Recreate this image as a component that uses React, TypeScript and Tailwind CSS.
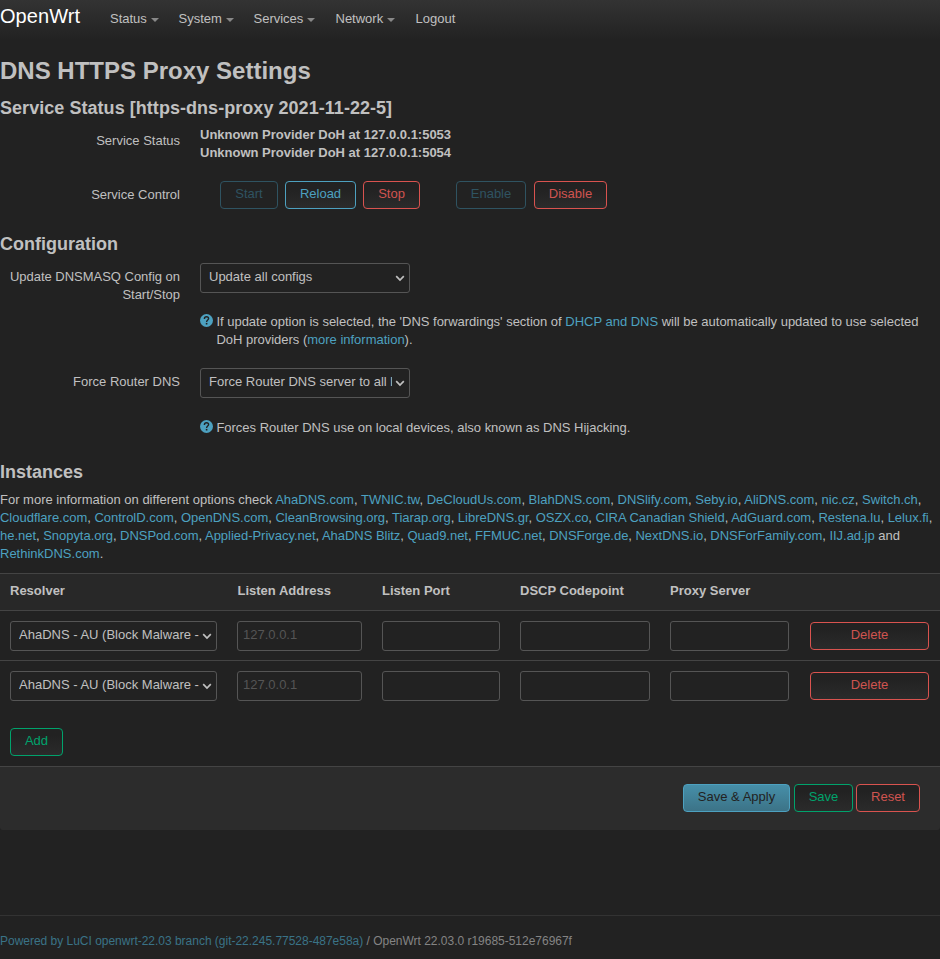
import type { ReactNode } from "react";

const menu = [
  { label: "Status", cls: "w-[68.5px]", caret: true },
  { label: "System", cls: "w-[75px]", caret: true },
  { label: "Services", cls: "w-[82px]", caret: true },
  { label: "Network", cls: "w-[80px]", caret: true },
  { label: "Logout", cls: "w-[60px]", caret: false },
];

const providerLines = [
  { cls: "tracking-[0.002px]", names: ["AhaDNS.com", "TWNIC.tw", "DeCloudUs.com", "BlahDNS.com", "DNSlify.com", "Seby.io", "AliDNS.com", "nic.cz", "Switch.ch"] },
  { cls: "tracking-[-0.014px]", names: ["Cloudflare.com", "ControlD.com", "OpenDNS.com", "CleanBrowsing.org", "Tiarap.org", "LibreDNS.gr", "OSZX.co", "CIRA Canadian Shield", "AdGuard.com", "Restena.lu", "Lelux.fi"] },
  { cls: "tracking-[-0.03px]", names: ["he.net", "Snopyta.org", "DNSPod.com", "Applied-Privacy.net", "AhaDNS Blitz", "Quad9.net", "FFMUC.net", "DNSForge.de", "NextDNS.io", "DNSForFamily.com"] },
];

const tones = {
  action: "border-[#4da1c0] text-[#4da1c0] bg-linear-to-b from-[#222] from-25% to-[#2b2b2b]",
  muted: "border-[#2f5361] text-[#2f5361] bg-[#222]",
  negative: "border-[#d9534f] text-[#d05450] bg-linear-to-b from-[#222] from-25% to-[#2b2b2b]",
  positive: "border-[#00a36c] text-[#00a36c] bg-linear-to-b from-[#222] from-25% to-[#2b2b2b]",
  primary: "border-[#4da1c0] text-[#222] bg-linear-to-b from-[#468fa9] to-[#3c7387]",
};

function Button({ tone, className, children }: { tone: keyof typeof tones; className: string; children: ReactNode }) {
  return (
    <button className={`box-border h-7 shrink-0 rounded-[4px] border pb-[2px] text-center leading-[18px] ${tones[tone]} ${className}`}>
      {children}
    </button>
  );
}

function Select({ className, children }: { className: string; children: ReactNode }) {
  return (
    <div className={`flex h-[30px] items-center rounded-[3px] border border-[#555] pr-[4px] pl-2 ${className}`}>
      <span className="mr-[3px] min-w-0 flex-1 overflow-hidden whitespace-nowrap pb-[2px] leading-[18px]">{children}</span>
      <svg className="mt-[1px] h-[7px] w-[10px] shrink-0" viewBox="0 0 10 7" fill="none" stroke="#c0c0c0" strokeWidth="1.7">
        <path d="M1.2 1.2 5 5l3.8-3.8" />
      </svg>
    </div>
  );
}

function Hint({ children }: { children: ReactNode }) {
  return (
    <div className="flex leading-[18px]">
      <svg className="mt-[1px] mr-[3.4px] h-[13px] w-[13px] shrink-0" viewBox="0 0 13 13">
        <circle cx="6.5" cy="6.5" r="6.5" fill="#4da1c0" />
        <path d="M4.4 4.9c0-1.4.9-2.1 2.1-2.1s2.1.7 2.1 1.8c0 1.5-2 1.5-2 3.3" fill="none" stroke="#222" strokeWidth="1.4" />
        <rect x="5.8" y="8.9" width="1.6" height="1.6" fill="#222" />
      </svg>
      <div className="whitespace-nowrap tracking-[-0.012px]">{children}</div>
    </div>
  );
}

function Link({ children }: { children: ReactNode }) {
  return <a className="text-[#4da1c0]">{children}</a>;
}

function InstanceRow() {
  const field = "h-[30px] min-w-0 rounded-[3px] border border-[#555] bg-transparent px-[5px] pb-[3px] placeholder:text-[#555] placeholder:opacity-100 outline-none";
  return (
    <div className="flex h-[49px] items-center pl-[10px]">
      <Select className="w-[207px]">AhaDNS - AU (Block Malware -</Select>
      <input className={`${field} ml-5 w-[125px]`} placeholder="127.0.0.1" />
      <input className={`${field} ml-5 w-[118px]`} />
      <input className={`${field} ml-5 w-[130px]`} />
      <input className={`${field} ml-5 w-[119px]`} />
      <Button tone="negative" className="ml-[21px] w-[119px]">Delete</Button>
    </div>
  );
}

export default function App() {
  return (
    <div className="h-[959px] w-[940px] overflow-hidden bg-[#222] font-['Liberation_Sans',Arial,sans-serif] text-[13px] leading-[18px] text-[#c0c0c0]">
      <header className="flex h-10 bg-linear-to-b from-[#333] to-[#222] whitespace-nowrap">
        <a className="w-[110px] pt-[4px] text-[20px] leading-6 tracking-[0.05px] text-white">OpenWrt</a>
        {menu.map((m) => (
          <a key={m.label} className={`flex h-[38px] items-center ${m.cls}`}>
            {m.label}
            {m.caret && <span className="mt-[2px] ml-1 border-x-4 border-t-4 border-x-transparent border-t-[#888]" />}
          </a>
        ))}
      </header>

      <h2 className="mt-[13px] h-9 text-[24px] leading-9 font-bold">DNS HTTPS Proxy Settings</h2>
      <h3 className="h-9 pt-[1px] text-[18px] leading-9 font-bold tracking-[0.045px]">Service Status [https-dns-proxy 2021-11-22-5]</h3>

      <div className="flex h-9">
        <div className="w-[180px] pt-[7px] text-right">Service Status</div>
        <div className="pl-5 pt-[1px] font-bold tracking-[-0.01px]">
          Unknown Provider DoH at 127.0.0.1:5053
          <br />
          Unknown Provider DoH at 127.0.0.1:5054
        </div>
      </div>
      <div className="mt-5 flex h-7">
        <div className="w-[180px] pt-[5px] text-right">Service Control</div>
        <Button tone="muted" className="ml-10 w-[58px]">Start</Button>
        <Button tone="action" className="ml-[7px] w-[71px]">Reload</Button>
        <Button tone="negative" className="ml-[7px] w-[57px]">Stop</Button>
        <Button tone="muted" className="ml-9 w-[70px]">Enable</Button>
        <Button tone="negative" className="ml-2 w-[73px]">Disable</Button>
      </div>

      <h3 className="mt-[17px] h-9 text-[18px] leading-9 font-bold">Configuration</h3>
      <div className="mt-[1px] flex h-[50px]">
        <div className="w-[180px] pt-[5px] text-right tracking-[-0.02px]">Update DNSMASQ Config on Start/Stop</div>
        <Select className="ml-5 w-[210px]">Update all configs</Select>
      </div>
      <div className="h-[55px] pl-[200px]">
        <Hint>
          If update option is selected, the 'DNS forwardings' section of <Link>DHCP and DNS</Link> will be automatically updated to use selected
          <br />
          DoH providers (<Link>more information</Link>).
        </Hint>
      </div>
      <div className="flex h-[50px]">
        <div className="w-[180px] pt-[5px] text-right">Force Router DNS</div>
        <Select className="ml-5 w-[210px]">Force Router DNS server to all local devices</Select>
      </div>
      <div className="h-9 pt-[1px] pl-[200px]">
        <Hint>Forces Router DNS use on local devices, also known as DNS Hijacking.</Hint>
      </div>

      <h3 className="h-9 text-[18px] leading-9 font-bold">Instances</h3>
      <div className="mt-[1px] h-[82px] whitespace-nowrap">
        {providerLines.map((line, i) => (
          <div key={i} className={line.cls}>
            {i === 0 && "For more information on different options check "}
            {line.names.map((name) => (
              <span key={name}><Link>{name}</Link>, </span>
            ))}
            {i === 2 && <><Link>IIJ.ad.jp</Link> and</>}
          </div>
        ))}
        <div><Link>RethinkDNS.com</Link>.</div>
      </div>

      <div className="flex h-[38px] border-y border-[#444] bg-[#282828] pt-[8px] pl-[10px] font-bold">
        <div className="w-[227.5px]">Resolver</div>
        <div className="w-[144.5px]">Listen Address</div>
        <div className="w-[138px]">Listen Port</div>
        <div className="w-[150px]">DSCP Codepoint</div>
        <div>Proxy Server</div>
      </div>
      <InstanceRow />
      <div className="border-t border-[#444]">
        <InstanceRow />
      </div>
      <div className="h-[56px] pt-[18px] pl-[10px]">
        <Button tone="positive" className="w-[53px]">Add</Button>
      </div>
      <div className="flex h-16 justify-end rounded-b-[3px] border-t border-[#444] bg-[#2c2c2c] pt-[17px] pr-5">
        <Button tone="primary" className="w-[107px]">Save &amp; Apply</Button>
        <Button tone="positive" className="ml-1 w-[59px]">Save</Button>
        <Button tone="negative" className="ml-[3px] w-[64px]">Reset</Button>
      </div>

      <footer className="mt-[85px] border-t border-[#333] pt-4 text-[12px] tracking-[-0.016px] whitespace-nowrap text-[#848484]">
        <a className="text-[#3a7387]">Powered by LuCI openwrt-22.03 branch (git-22.245.77528-487e58a)</a> / OpenWrt 22.03.0 r19685-512e76967f
      </footer>
    </div>
  );
}
